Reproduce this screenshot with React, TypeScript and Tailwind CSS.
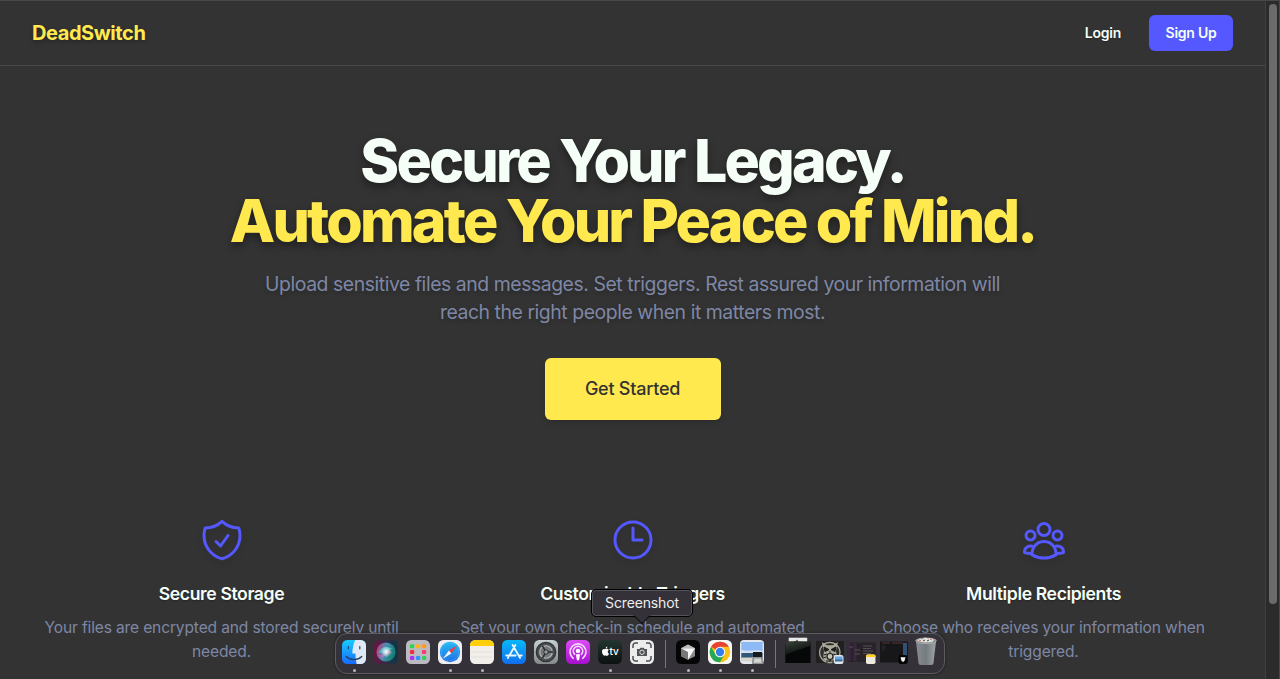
import type { ReactNode } from "react";
import { HiOutlineClock, HiOutlineShieldCheck, HiOutlineUserGroup } from "react-icons/hi2";

const features = [
  {
    icon: HiOutlineShieldCheck,
    title: "Secure Storage",
    text: "Your files are encrypted and stored securely until needed.",
  },
  {
    icon: HiOutlineClock,
    title: "Customizable Triggers",
    text: "Set your own check-in schedule and automated triggers.",
  },
  {
    icon: HiOutlineUserGroup,
    title: "Multiple Recipients",
    text: "Choose who receives your information when triggered.",
  },
];

function Header() {
  return (
    <header className="flex h-[66px] items-center justify-between border-y border-[#484848] pr-8 pl-8">
      <span className="text-xl font-bold tracking-[-0.42px] text-[#ffe94f] [text-shadow:0_2px_4px_rgba(0,0,0,0.3)]">
        DeadSwitch
      </span>
      <nav className="flex items-center gap-7 text-sm font-semibold tracking-[-0.25px] text-[#f5fff8]">
        <a className="[text-shadow:0_1px_2px_rgba(0,0,0,0.3)]">Login</a>
        <button className="h-9 w-[84px] rounded-md bg-[#5558ff] text-center">Sign Up</button>
      </nav>
    </header>
  );
}

function Hero() {
  return (
    <section className="flex flex-col items-center pt-[65px] text-center">
      <h1 className="text-[59px] leading-[60px] font-extrabold tracking-[-2.8px] text-[#f5fff8] [text-shadow:0_4px_8px_rgba(0,0,0,0.4)]">
        <span className="block">Secure Your Legacy.</span>
        <span className="block text-[#ffe94f]">Automate Your Peace of Mind.</span>
      </h1>
      <p className="mt-[19px] w-[768px] text-[19.4px] leading-7 tracking-[-0.44px] text-[#7e87a5] [text-shadow:0_2px_4px_rgba(0,0,0,0.25)]">
        Upload sensitive files and messages. Set triggers. Rest assured your information will
        <br />
        reach the right people when it matters most.
      </p>
      <button className="mt-8 h-[62px] w-44 rounded-md bg-[#ffe94f] text-lg font-medium tracking-[-0.25px] text-[#333] shadow-md">
        Get Started
      </button>
    </section>
  );
}

function Features() {
  return (
    <section className="grid grid-cols-3 gap-8 px-8 pt-24">
      {features.map(({ icon: Icon, title, text }) => (
        <article key={title} className="flex flex-col items-center text-center">
          <Icon className="size-12 text-[#5558ff] drop-shadow-md" />
          <h3 className="mt-4 text-[17.6px] leading-7 font-semibold tracking-[-0.38px] text-[#f5fff8] [text-shadow:0_1px_2px_rgba(0,0,0,0.3)]">
            {title}
          </h3>
          <p className="mt-2 w-[375px] text-[15.6px] leading-6 tracking-[-0.16px] text-[#7e87a5]">{text}</p>
        </article>
      ))}
    </section>
  );
}

function Tile({ children, running = false }: { children: ReactNode; running?: boolean }) {
  return (
    <div className="flex w-8 flex-col items-center">
      <svg viewBox="0 0 24 24" className="size-6 overflow-visible">
        {children}
      </svg>
      {running && <span className="mt-[5px] size-[3px] rounded-full bg-[#b9b8bb]" />}
    </div>
  );
}

function Separator() {
  return (
    <div className="flex w-[14px] justify-center">
      <span className="h-7 w-px bg-[#77757a]" />
    </div>
  );
}

const padColors = ["#28d74b", "#ffb21a", "#ff9a1b", "#f22c3d", "#b8bdc4", "#ff3970", "#a832f5", "#2b94ff", "#32cf62"];

function AppIcons() {
  return (
    <>
      <Tile running>
        <clipPath id="finderClip"><rect width="24" height="24" rx="5.2" /></clipPath>
        <g clipPath="url(#finderClip)">
          <rect width="24" height="24" fill="url(#finderBlue)" />
          <path d="M13.2 0C11.4 4 10.4 8.7 10.3 13.6h3.2c-.1 3.7.3 7 1.2 10.4H24V0z" fill="#e2e9f6" />
        </g>
        <path d="M6.3 6.6v2.2M17.8 6.6v2.2M4.2 16.5c4.1 4.1 11.4 4.1 15.6 0" fill="none" stroke="#263d62" strokeWidth="1.2" strokeLinecap="round" />
      </Tile>
      <Tile>
        <rect width="24" height="24" rx="5.2" fill="url(#siriBack)" />
        <circle cx="12" cy="12" r="9.6" fill="url(#siriOrb)" />
        <path d="M4 13c4-7 8-7 15-4-5 0-6 3-6 9-2-4-4-6-9-5z" fill="#4ad4c8" opacity=".6" />
        <path d="M4 15c5 0 8-1 11-6l4 5c-5-2-8 1-10 5z" fill="#e964bd" opacity=".5" />
        <circle cx="12.2" cy="11.7" r="5.5" fill="url(#siriGlow)" />
      </Tile>
      <Tile>
        <rect width="24" height="24" rx="5.2" fill="#babac0" />
        {padColors.map((color, i) => (
          <rect key={color} x={4 + (i % 3) * 6} y={4.3 + Math.floor(i / 3) * 5.8} width="4.2" height="4" rx="1" fill={color} />
        ))}
      </Tile>
      <Tile running>
        <rect width="24" height="24" rx="5.2" fill="#eeeef0" />
        <circle cx="12" cy="12" r="10.2" fill="url(#safariBlue)" />
        <circle cx="12" cy="12" r="8.7" fill="none" stroke="#a8dcff" strokeWidth=".8" strokeDasharray=".4 1.2" />
        <path d="M19.3 5.3l-8.4 5.3 2.5 2.8z" fill="#f33b42" />
        <path d="M4.8 18.8l6.1-8.2 2.5 2.8z" fill="#f4f7fb" />
      </Tile>
      <Tile running>
        <rect width="24" height="24" rx="5.2" fill="#f2efeb" />
        <path d="M0 6V5.2A5.2 5.2 0 015.2 0h13.6A5.2 5.2 0 0124 5.2V6z" fill="#ffcf0a" />
        <path d="M1 12h22M1 17h22" stroke="#d8d6d2" strokeWidth=".6" />
      </Tile>
      <Tile>
        <rect width="24" height="24" rx="5.2" fill="url(#storeBlue)" />
        <path d="M13.4 5L7.4 15.5M10.6 5l7.5 13M4.2 15.5h9.5M17 15.5h2.8M6.4 17.2l-.5.9" fill="none" stroke="#e9f7ff" strokeWidth="1.8" strokeLinecap="round" />
      </Tile>
      <Tile>
        <rect width="24" height="24" rx="5.2" fill="url(#metal)" />
        <circle cx="12" cy="12" r="9.7" fill="#5d6062" stroke="#303336" strokeWidth="1.3" />
        <circle cx="12" cy="12" r="8.2" fill="none" stroke="#303336" strokeWidth="1.2" strokeDasharray="1 .7" />
        <circle cx="12" cy="12" r="6.3" fill="#777a7c" stroke="#b7b9ba" strokeWidth="1.1" />
        <path d="M12 12h7M12 12L8.5 5.9M12 12l-3.5 6.1" stroke="#292c2e" strokeWidth="1.5" />
        <circle cx="12" cy="12" r="2.2" fill="#999c9e" stroke="#292c2e" />
      </Tile>
      <Tile>
        <rect width="24" height="24" rx="5.2" fill="url(#podPurple)" />
        <g fill="none" stroke="#f7dcff" strokeWidth="1.6" strokeLinecap="round">
          <path d="M7.2 18.3a8 8 0 119.6 0" />
          <path d="M8.6 14.3a4.7 4.7 0 116.8 0" />
        </g>
        <circle cx="12" cy="10.9" r="2.2" fill="white" />
        <path d="M10 14.5c.8-.8 3.2-.8 4 0l-.8 5.3c-.3 1-2.1 1-2.4 0z" fill="white" />
      </Tile>
      <Tile running>
        <rect width="24" height="24" rx="5.2" fill="url(#tvBlack)" />
        <path d="M9.9 9.3c-.7-.6-1.7-.5-2.3-.2-.6.2-.9.1-1.5-.1-2.7-.2-2.6 4.4-.5 6.3.8.7 1.3.1 2.1.1.9 0 1.3.7 2.2 0 .5-.5.9-1 1.1-1.7-1.7-.8-1.7-3-.1-3.7-.2-.3-.6-.6-1-.7zM7.6 8.4c.1-1.1.8-1.8 1.8-2 0 1.1-.7 1.9-1.8 2z" fill="white" />
        <text x="11.6" y="15.4" fill="white" fontFamily="Inter, sans-serif" fontSize="10" fontWeight="500" letterSpacing="-.2">tv</text>
      </Tile>
      <Tile>
        <rect width="24" height="24" rx="5.2" fill="#ececec" />
        <g fill="none" stroke="#4b4d50" strokeWidth="1.5">
          <path d="M3 8V5.5A2.5 2.5 0 015.5 3H8M16 3h2.5A2.5 2.5 0 0121 5.5V8M3 16v2.5A2.5 2.5 0 005.5 21H8M16 21h2.5a2.5 2.5 0 002.5-2.5V16" />
        </g>
        <path d="M7 9.1h2.5l1-1.4h3l1 1.4H17v6.8H7z" fill="#515356" />
        <circle cx="12" cy="12.3" r="2.2" fill="#515356" stroke="#ececec" strokeWidth=".9" />
      </Tile>
      <Separator />
      <Tile running>
        <rect width="24" height="24" rx="5.2" fill="#050505" />
        <path d="M12 4.5l7 3.8v7.9l-7 3.6-7-3.6V8.3z" fill="#89898b" />
        <path d="M5 8.3l7 3.8v7.7l-7-3.6z" fill="#77777a" />
        <path d="M5 8.3h14l-7 11.5v-7.7z" fill="#f6f6f6" />
        <path d="M12 4.5l7 3.8H5z" fill="#bbb" />
      </Tile>
      <Tile running>
        <rect width="24" height="24" rx="5.2" fill="#f7f7f7" />
        <circle cx="12" cy="12" r="10.3" fill="#fbc116" />
        <path d="M12 12L3.1 6.8A10.3 10.3 0 0120.9 6.8H12z" fill="#e94335" />
        <path d="M3.1 6.8A10.3 10.3 0 0012 22.3l4.5-7.7L12 12l-4.5 2.6z" fill="#24a955" />
        <circle cx="12" cy="12" r="5.2" fill="white" />
        <circle cx="12" cy="12" r="4.2" fill="#367ee9" />
      </Tile>
      <Tile running>
        <rect width="24" height="24" rx="4" fill="#e4e8ee" />
        <path d="M1.3 2h21.4v11H1.3z" fill="#8dbaf5" />
        <path d="M1.3 10c8 2 15-1 21.4 1v3H1.3z" fill="#d5e1ef" />
        <path d="M1.3 13h21.4v6H1.3z" fill="#315778" />
        <path d="M1.3 17.5h12v4h-12z" fill="#d8d5cf" />
        <path d="M13.2 12.5h8.8l1.6 11.6H11.8z" fill="#8e9293" />
        <path d="M13 12h9v5h-9z" fill="#171a1e" />
        <path d="M14.4 18.5h6.5l.7 4.2h-7.9z" fill="#d2d4d3" />
      </Tile>
      <Separator />
      <Tile>
        <path d="M2.7-2.3h18.5v6H2.7z" fill="#e9e9e9" />
        <path d="M7 3.5c1-4 3-1 4-4l2 3 2-1 2 2z" fill="#454747" />
        <path d="M-.7 1.6h25.3V23H-.7z" fill="#050806" />
        <path d="M-.7 1.6h25.3v4C18 8 10 11-.7 15z" fill="url(#glass)" />
      </Tile>
      <Tile>
        <path d="M-2 1h28v22H-2z" fill="#202020" />
        <circle cx="11.8" cy="12.5" r="10.2" fill="#30302d" stroke="#a9a899" strokeWidth="1.2" />
        <path d="M5 19l1-8-2.2-9 5 3.2h6l5-3.2L18 11l1 8-4 3-3-3-3 3z" fill="#aaa99b" />
        <path d="M6 7l5 2.6-4 2zM18 7l-5 2.6 4 2zM12 11v2M6 15l3-1M18 15l-3-1M5 18l3-1M19 18l-3-1M9 20v3M15 20v3" fill="#1d1e1d" stroke="#1d1e1d" />
        <circle cx="12" cy="16.5" r="3" fill="#c6c5b5" stroke="#1d1e1d" strokeWidth="1.2" />
        <rect x="16" y="15" width="9.5" height="9" rx="2" fill="#dfe7ef" />
        <path d="M17 16.5h7.5v4H17z" fill="#66a4e4" />
        <path d="M17 19.5h7.5v2H17z" fill="#42698e" />
      </Tile>
      <Tile>
        <path d="M-2.2 2.5h28V22h-28z" fill="#282229" />
        <path d="M-1 3v18M5 3v18" stroke="#39283e" strokeWidth="3" />
        <path d="M13 6h9M13 8.5h8M13 11h10M13 13.5h8M-1 7h4M5 10h5M5 14h5" stroke="#68616b" strokeWidth=".7" />
        <rect x="16" y="14.5" width="9.5" height="9.5" rx="1.8" fill="#eeeae0" />
        <path d="M16 17v-1q0-1.5 1.5-1.5H24q1.5 0 1.5 1.5v1z" fill="#ffcf20" />
      </Tile>
      <Tile>
        <path d="M-2 1.5h28v21H-2z" fill="#171719" />
        <path d="M0 3h8M10 3h11" stroke="#763c49" strokeWidth=".7" />
        <path d="M21 3h4v13h-4z" fill="#315274" />
        <path d="M0 6h3M0 8h4M0 10h2" stroke="#393d40" strokeWidth=".6" />
        <rect x="16.5" y="15" width="9" height="9" rx="2" fill="#050505" />
        <path d="M18.5 17.3h5l-.8 3-1.7 2-1.7-2z" fill="#f4f4f4" />
      </Tile>
      <Tile>
        <path d="M1.8-.2h20.4L19.5 23c-.1 1.2-1.1 2-2.2 2H6.7c-1.1 0-2.1-.8-2.2-2z" fill="url(#trashGray)" />
        <ellipse cx="12" cy=".8" rx="10.3" ry="2.8" fill="#858a8b" stroke="#b6b9ba" strokeWidth=".7" />
        <path d="M3 .5l3-2 2 1 3-2 3 1 3-.6 3 2-2 2-6 .7-5-.5z" fill="#e6e4df" />
        <path d="M5 0l2 1M16-1l2 1" stroke="#d55450" />
        <path d="M9 1l2-1M13 1l2-1" stroke="#2e5355" />
      </Tile>
    </>
  );
}

function Gradients() {
  return (
    <svg className="absolute size-0">
      <defs>
        <linearGradient id="finderBlue" x2="0" y2="1"><stop stopColor="#18ccfb" /><stop offset="1" stopColor="#176bff" /></linearGradient>
        <linearGradient id="siriBack"><stop stopColor="#641942" /><stop offset="1" stopColor="#073946" /></linearGradient>
        <linearGradient id="siriOrb" x2="1" y2=".3"><stop stopColor="#e2246c" /><stop offset=".5" stopColor="#4b8fb5" /><stop offset="1" stopColor="#128074" /></linearGradient>
        <radialGradient id="siriGlow"><stop stopColor="white" /><stop offset="1" stopColor="white" stopOpacity="0" /></radialGradient>
        <linearGradient id="safariBlue" x2="0" y2="1"><stop stopColor="#24baf4" /><stop offset="1" stopColor="#2370e6" /></linearGradient>
        <linearGradient id="storeBlue" x2="0" y2="1"><stop stopColor="#08b9fb" /><stop offset="1" stopColor="#116dee" /></linearGradient>
        <linearGradient id="metal" x2="0" y2="1"><stop stopColor="#c6d0d1" /><stop offset="1" stopColor="#85898c" /></linearGradient>
        <linearGradient id="podPurple" x2="0" y2="1"><stop stopColor="#dc4cf8" /><stop offset="1" stopColor="#a510cd" /></linearGradient>
        <linearGradient id="tvBlack" x2="0" y2="1"><stop stopColor="#23352f" /><stop offset="1" stopColor="#0b1111" /></linearGradient>
        <linearGradient id="glass" x2=".5" y2="1"><stop stopColor="#39423b" /><stop offset="1" stopColor="#080c09" /></linearGradient>
        <linearGradient id="trashGray"><stop stopColor="#888d91" /><stop offset=".5" stopColor="#757b7f" /><stop offset="1" stopColor="#a2a5a7" /></linearGradient>
      </defs>
    </svg>
  );
}

function Dock() {
  return (
    <>
      <div className="absolute top-[633px] left-[335px] flex h-[41px] w-[610px] items-start rounded-xl border border-[#5d5b60] bg-[#343238] pt-[6px] pl-[2px] shadow-[0_0_3px_rgba(0,0,0,0.5)]">
        <AppIcons />
      </div>
      <div className="absolute top-[589px] left-[591px] h-[28px] w-[102px] rounded-[5px] border border-black bg-[#343238] text-center text-sm leading-[26px] tracking-[-0.15px] text-[#eeedef] shadow-[inset_0_0_0_1px_#55535a]">
        Screenshot
        <svg viewBox="0 0 18 10" className="absolute top-[25px] left-[41px] h-[10px] w-[18px]">
          <path d="M0 0h18v1c-2 0-3 1-4 2l-4 4.5q-1 1-2 0L4 3C3 2 2 1 0 1z" fill="#343238" />
          <path d="M0 1.5c2 0 3 .8 4 1.8l4 4.5q1 1 2 0l4-4.5c1-1 2-1.8 4-1.8" fill="none" stroke="black" />
        </svg>
      </div>
    </>
  );
}

export default function App() {
  return (
    <div className="relative flex h-[679px] overflow-hidden bg-[#333] font-['Inter',sans-serif]">
      <Gradients />
      <main className="w-[1265px] shrink-0">
        <Header />
        <Hero />
        <Features />
      </main>
      <aside className="flex w-[15px] justify-center border-t border-r border-l border-t-[#484848] border-r-[#494949] border-l-[#404040] bg-[#2b2b2b] pt-[3px]">
        <span className="h-[600px] w-2 rounded-full bg-[#6b6b6b]" />
      </aside>
      <Dock />
    </div>
  );
}
